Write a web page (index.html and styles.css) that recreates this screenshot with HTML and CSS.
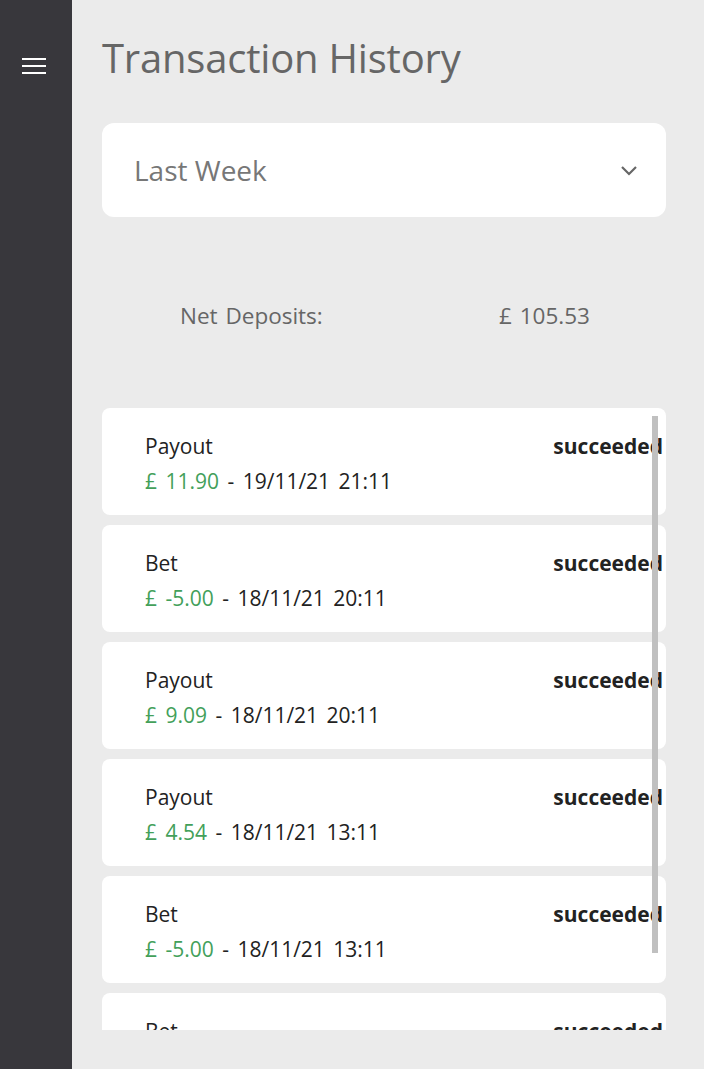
FILE: index.html
```
<html>
<head>
<meta charset="utf-8">
<title>Transaction History</title>
<link rel="stylesheet" href="styles.css">
</head>
<body>
<div class="app">
    <div class="sidebar">
        <a class="menu" href="javascript:;">
            <svg width="26" height="20" viewBox="0 0 26 20"><path d="M1 3h24M1 10h24M1 17h24" stroke="#fff" stroke-width="2.2" fill="none"/></svg>
        </a>
    </div>
    <div class="main">
        <h1 class="title">Transaction History</h1>
        <div class="select">
            <span>Last Week</span>
            <svg width="18" height="12" viewBox="0 0 18 12"><path d="M2 3l7 7 7-7" stroke="#666" stroke-width="2.2" fill="none"/></svg>
        </div>
        <div class="net">
            <span>Net Deposits:</span>
            <span>£ 105.53</span>
        </div>
        <div class="list">
            <div class="item">
                <div><p class="type">Payout</p><p class="meta"><span class="amt">£ 11.90</span> - 19/11/21 21:11</p></div>
                <b class="status">succeeded</b>
            </div>
            <div class="item">
                <div><p class="type">Bet</p><p class="meta"><span class="amt">£ -5.00</span> - 18/11/21 20:11</p></div>
                <b class="status">succeeded</b>
            </div>
            <div class="item">
                <div><p class="type">Payout</p><p class="meta"><span class="amt">£ 9.09</span> - 18/11/21 20:11</p></div>
                <b class="status">succeeded</b>
            </div>
            <div class="item">
                <div><p class="type">Payout</p><p class="meta"><span class="amt">£ 4.54</span> - 18/11/21 13:11</p></div>
                <b class="status">succeeded</b>
            </div>
            <div class="item">
                <div><p class="type">Bet</p><p class="meta"><span class="amt">£ -5.00</span> - 18/11/21 13:11</p></div>
                <b class="status">succeeded</b>
            </div>
            <div class="item">
                <div><p class="type">Bet</p><p class="meta"><span class="amt">£ -5.00</span> - 18/11/21 12:11</p></div>
                <b class="status">succeeded</b>
            </div>
            <div class="thumb"></div>
        </div>
    </div>
</div>
</body>
</html>
```
FILE: styles.css
```
body,div,p,h1{margin:0;padding:0;}
body{font-family:"Open Sans","Noto Sans",sans-serif;background:#ebebeb;color:#222;}
.app{display:flex;height:1069px;}
.sidebar{width:72px;background:#38373c;flex-shrink:0;}
.menu{display:block;padding:56px 0 0 21px;line-height:0;}
.main{flex:1;padding:30px 38px 0 30px;}
.title{font-size:40px;font-weight:400;color:#666;line-height:56px;letter-spacing:-0.2px;}
.select{margin-top:37px;height:94px;background:#fff;border-radius:12px;display:flex;align-items:center;justify-content:space-between;padding:0 28px 0 32px;}
.select span{font-size:28px;color:#777;}
.net{display:grid;grid-template-columns:319px 1fr;padding:70px 0 0 78px;height:120px;font-size:22.5px;color:#666;line-height:58px;box-sizing:border-box;word-spacing:2px;}
.list{position:relative;margin-top:71px;height:622px;overflow:hidden;display:flex;flex-direction:column;gap:10px;}
.item{flex-shrink:0;height:107px;background:#fff;border-radius:8px;display:flex;justify-content:space-between;padding:21px 3px 0 43px;box-sizing:border-box;font-size:21px;line-height:35px;word-spacing:3px;}
.amt{color:#43a05a;}
.status{font-weight:700;font-size:21px;line-height:35px;}
.thumb{position:absolute;left:550px;top:8px;width:6px;height:537px;background:#c0c0c0;}
```
